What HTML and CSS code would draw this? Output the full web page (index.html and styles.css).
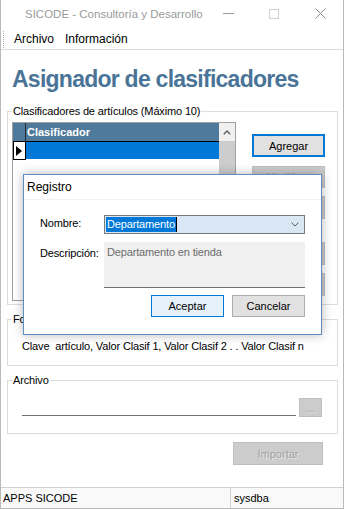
FILE: index.html
```html
<!DOCTYPE html>
<html lang="es">
<head>
<meta charset="utf-8">
<title>SICODE</title>
<link rel="stylesheet" href="styles.css">
</head>
<body>
<div class="window">
  <div class="titlebar">
    <span class="title">SICODE - Consultoría y Desarrollo</span>
    <div class="controls">
      <span class="ctl"><svg width="11" height="11" viewBox="0 0 11 11"><line x1="0" y1="5.5" x2="11" y2="5.5" stroke="#9a9a9a" stroke-width="1"/></svg></span>
      <span class="ctl"><svg width="10" height="10" viewBox="0 0 10 10"><rect x="0.5" y="0.5" width="9" height="9" fill="none" stroke="#d0d0d0" stroke-width="1"/></svg></span>
      <span class="ctl"><svg width="11" height="11" viewBox="0 0 11 11"><path d="M0.5 0.5 L10.5 10.5 M10.5 0.5 L0.5 10.5" stroke="#8c8c8c" stroke-width="1" fill="none"/></svg></span>
    </div>
  </div>
  <div class="menubar">
    <span class="grip"></span>
    <span class="menu-item first">Archivo</span>
    <span class="menu-item">Información</span>
  </div>
  <div class="client">
    <h1 class="heading">Asignador de clasificadores</h1>
    <fieldset class="group group-clasif">
      <legend>Clasificadores de artículos (Máximo 10)</legend>
      <div class="clasif-row">
        <div class="grid">
          <div class="grid-main">
            <div class="grid-header">
              <span class="rowhead"></span>
              <span class="colhead">Clasificador</span>
            </div>
            <div class="grid-row">
              <span class="rowhead current"><svg width="6" height="10" viewBox="0 0 6 10"><polygon points="0,0 6,5 0,10" fill="#000"/></svg></span>
              <span class="cell selected"></span>
            </div>
          </div>
          <div class="vscroll">
            <span class="sb-up"><svg width="8" height="5" viewBox="0 0 8 5"><path d="M0.8 4.2 L4 1 L7.2 4.2" fill="none" stroke="#5f5f5f" stroke-width="1.4"/></svg></span>
            <span class="sb-thumb"></span>
          </div>
        </div>
        <div class="side-buttons">
          <button class="btn btn-default">Agregar</button>
          <button class="btn btn-disabled b2">Modificar</button>
          <button class="btn btn-disabled b3">Eliminar</button>
          <button class="btn btn-disabled b4">Subir</button>
          <button class="btn btn-disabled b5">Bajar</button>
        </div>
      </div>
    </fieldset>
    <fieldset class="group group-formato">
      <legend>Formato</legend>
      <div class="format-text">Clave  artículo, Valor Clasif 1, Valor Clasif 2 . . Valor Clasif n</div>
    </fieldset>
    <fieldset class="group group-archivo">
      <legend>Archivo</legend>
      <div class="file-row">
        <span class="file-input"></span>
        <button class="btn btn-disabled btn-browse">...</button>
      </div>
    </fieldset>
    <button class="btn btn-disabled btn-import">Importar</button>
  </div>
  <div class="statusbar">
    <span class="panel panel-app">APPS SICODE</span>
    <span class="panel panel-user">sysdba</span>
  </div>

  <div class="dialog">
    <div class="dlg-title">Registro</div>
    <div class="dlg-body">
      <div class="dlg-row">
        <span class="dlg-label">Nombre:</span>
        <div class="combo">
          <span class="combo-text"><span class="sel">Departamento</span><span class="caret"></span></span>
          <svg class="chev" width="8" height="5" viewBox="0 0 8 5"><path d="M0.5 0.5 L4 4 L7.5 0.5" fill="none" stroke="#606060" stroke-width="1"/></svg>
        </div>
      </div>
      <div class="dlg-row row-desc">
        <span class="dlg-label label-desc">Descripción:</span>
        <div class="textarea">Departamento en tienda</div>
      </div>
      <div class="dlg-buttons">
        <button class="btn btn-accept">Aceptar</button>
        <button class="btn btn-cancel">Cancelar</button>
      </div>
    </div>
  </div>
</div>
</body>
</html>
```

FILE: styles.css
```css
* { box-sizing: border-box; }
html, body { margin: 0; padding: 0; }
body {
  width: 344px;
  height: 509px;
  overflow: hidden;
  font-family: "Liberation Sans", Arial, sans-serif;
  font-size: 11px;
  letter-spacing: -0.15px;
  color: #000;
  background: #fff;
}
.window {
  position: relative;
  width: 344px;
  height: 509px;
  border: 1px solid #b9b9b9;
  border-top: none;
  display: flex;
  flex-direction: column;
  background: #fff;
}
.titlebar {
  height: 29px;
  flex: none;
  display: flex;
  align-items: center;
}
.title {
  flex: 1;
  padding-left: 24px;
  padding-bottom: 2px;
  font-size: 11.5px;
  letter-spacing: 0;
  color: #9a9a9a;
}
.controls { display: flex; align-self: stretch; }
.ctl {
  width: 46px;
  display: flex;
  align-items: center;
  justify-content: center;
  padding-bottom: 2px;
}
.menubar {
  height: 20px;
  flex: none;
  display: flex;
  align-items: center;
  font-size: 12px;
  letter-spacing: 0;
}
.grip {
  width: 1px;
  height: 17px;
  margin-left: 2px;
  border-left: 1px dotted #b0b0b0;
}
.menu-item { margin-left: 11px; }
.menu-item.first { margin-left: 10px; }
.client {
  flex: 1;
  border-top: 1px solid #dadada;
  padding: 0 5px 0 6px;
  display: flex;
  flex-direction: column;
}
.heading {
  margin: 15px 0 0 5px;
  font-size: 23px;
  line-height: 28px;
  font-weight: bold;
  color: #4a7497;
  letter-spacing: -0.75px;
  white-space: nowrap;
}
.group {
  margin: 0;
  min-width: 0;
  border: 1px solid #dcdcdc;
}
.group legend {
  padding: 0 1px;
  margin-left: 0;
  font-size: 11px;
  line-height: 14px;
}
.group-clasif { margin-top: 11px; padding: 4px 4px 3px 4px; }
.clasif-row { display: flex; align-items: flex-start; }
.grid {
  width: 224px;
  height: 179px;
  border: 1px solid #a0a0a0;
  display: flex;
  flex: none;
}
.grid-main { flex: 1; background: #fff; }
.grid-header {
  height: 19px;
  display: flex;
  background: #4f7a9b;
  border-bottom: 1px solid #000;
}
.grid-header .rowhead {
  width: 13px;
  border-right: 1px solid #2b2b2b;
}
.colhead {
  padding-left: 1px;
  color: #fff;
  font-weight: bold;
  font-size: 11px;
  letter-spacing: 0;
  line-height: 18px;
}
.grid-row { height: 18px; display: flex; }
.rowhead.current {
  width: 13px;
  border-left: 1px solid #000;
  border-right: 1px solid #000;
  border-bottom: 1px solid #000;
  display: flex;
  align-items: center;
  padding-left: 2px;
}
.cell.selected {
  flex: 1;
  height: 17px;
  background: #0078d7;
}
.vscroll {
  width: 16px;
  display: flex;
  flex-direction: column;
}
.sb-up {
  height: 18px;
  background: #f0f0f0;
  display: flex;
  align-items: center;
  justify-content: center;
}
.sb-thumb { flex: 1; background: #cdcdcd; }
.side-buttons {
  margin-left: 16px;
  width: 73px;
  display: flex;
  flex-direction: column;
}
.btn {
  font-family: "Liberation Sans", Arial, sans-serif;
  font-size: 11px;
  letter-spacing: 0;
  padding: 0;
  margin: 0;
  color: #000;
}
.btn-default {
  margin-top: 12px;
  height: 23px;
  background: #e1e1e1;
  border: 2px solid #0078d7;
}
.btn-disabled {
  background: #cccccc;
  border: 1px solid #bfbfbf;
  color: #a3a3a3;
  text-shadow: 1px 1px 0 #e6e6e6;
}
.b2 { margin-top: 9px; height: 22px; }
.b3 { margin-top: 8px; height: 23px; }
.b4 { margin-top: 23px; height: 23px; }
.b5 { margin-top: 8px; height: 23px; }
.group-formato { margin-top: 7px; padding: 13px 4px 12px 4px; }
.format-text {
  margin-left: 10px;
  white-space: pre;
  font-size: 11px;
  line-height: 14px;
}
.group-archivo { margin-top: 7px; padding: 11px 15px 16px 4px; }
.file-row { display: flex; align-items: flex-end; margin-left: 10px; }
.file-input {
  flex: 1;
  height: 18px;
  margin-bottom: 1px;
  border-bottom: 1px solid #6e6e6e;
}
.btn-browse {
  width: 23px;
  height: 19px;
  margin-left: 3px;
  line-height: 14px;
}
.btn-import {
  align-self: flex-end;
  margin-top: 8px;
  margin-right: 15px;
  width: 90px;
  height: 23px;
}
.statusbar {
  height: 21px;
  flex: none;
  display: flex;
  border-top: 1px solid #cfcfcf;
  background: #f9f9f9;
  font-size: 11px;
  letter-spacing: 0;
  line-height: 20px;
}
.panel-app { width: 229px; padding-left: 2px; }
.panel-user { flex: 1; border-left: 1px solid #d2d2d2; padding-left: 3px; }

.dialog {
  position: absolute;
  left: 22px;
  top: 174px;
  width: 299px;
  height: 161px;
  background: #fff;
  border: 1px solid #5d8ec2;
  box-shadow: 0 0 10px rgba(0, 0, 0, 0.28);
  display: flex;
  flex-direction: column;
}
.dlg-title {
  height: 25px;
  padding-left: 3px;
  font-size: 12px;
  letter-spacing: 0;
  line-height: 24px;
  border-bottom: 1px solid #f2f2f2;
}
.dlg-body {
  padding: 15px 16px 0 16px;
  display: flex;
  flex-direction: column;
}
.dlg-row { display: flex; align-items: flex-start; }
.dlg-label {
  width: 64px;
  line-height: 14px;
  padding-top: 1px;
}
.label-desc { padding-top: 4px; }
.combo {
  width: 201px;
  height: 19px;
  border: 1px solid #7a7a7a;
  background: #d9e6f3;
  display: flex;
  align-items: center;
  padding-left: 1px;
}
.combo-text { flex: 1; display: flex; align-items: center; }
.sel {
  background: #0078d7;
  color: #fff;
  line-height: 15px;
  padding: 0 1px;
}
.caret { width: 1px; height: 15px; background: #000; }
.chev { margin-right: 5px; }
.row-desc { margin-top: 8px; }
.textarea {
  width: 201px;
  height: 46px;
  background: #f0f0f0;
  border-bottom: 1px solid #6e6e6e;
  color: #6d6d6d;
  padding: 3px 3px;
  line-height: 14px;
}
.dlg-buttons {
  margin-top: 7px;
  display: flex;
  justify-content: flex-end;
  gap: 8px;
}
.btn-accept {
  width: 73px;
  height: 22px;
  background: #e5f1fb;
  border: 1px solid #0078d7;
}
.btn-cancel {
  width: 73px;
  height: 22px;
  background: #e1e1e1;
  border: 1px solid #adadad;
}
```
